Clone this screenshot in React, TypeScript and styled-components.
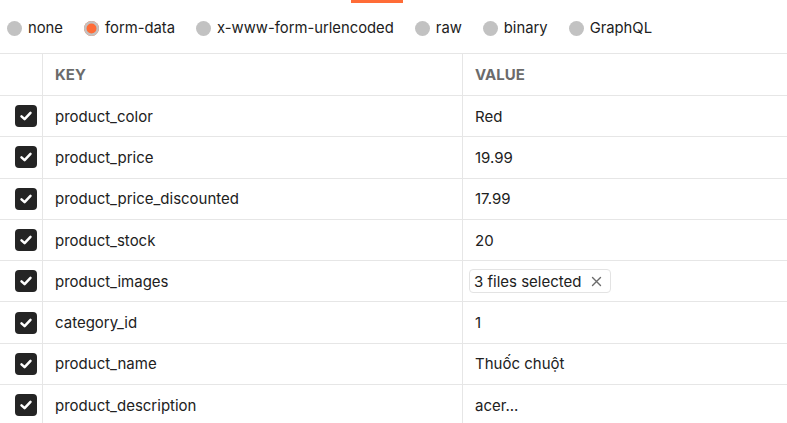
import React from "react";
import styled, { createGlobalStyle } from "styled-components";

const Global = createGlobalStyle`
  html, body { margin: 0; padding: 0; background: #ffffff; }
  body { font-family: Inter, "Noto Sans", sans-serif; color: #212121; overflow: hidden; }
  * { box-sizing: border-box; }
`;

const Page = styled.div`
  width: 787px;
  height: 423px;
  display: flex;
  flex-direction: column;
  position: relative;
  overflow: hidden;
`;

const TabIndicator = styled.div`
  position: absolute;
  top: 0;
  left: 351px;
  width: 52px;
  height: 3px;
  background: #ff6c37;
`;

const RadioBar = styled.div`
  height: 53px;
  flex: none;
  display: flex;
  align-items: center;
  padding: 3px 0 0 7px;
  gap: 21px;
`;

const RadioOption = styled.label`
  display: flex;
  align-items: center;
  gap: 6px;
  font-size: 14.8px;
  color: #212121;
  white-space: nowrap;
`;

const RadioDot = styled.span<{ $checked?: boolean }>`
  width: 15px;
  height: 15px;
  border-radius: 50%;
  background: ${(p) => (p.$checked ? "#ff6c37" : "#c2c2c2")};
  box-shadow: ${(p) => (p.$checked ? "inset 0 0 0 2.5px #c2c2c2" : "none")};
  flex: none;
`;

const Table = styled.div`
  flex: none;
  border-top: 1px solid #e6e6e6;
  display: flex;
  flex-direction: column;
`;

const Row = styled.div<{ $header?: boolean }>`
  display: grid;
  grid-template-columns: 43px 420px 1fr;
  height: ${(p) => (p.$header ? "42px" : "41.3px")};
  border-bottom: 1px solid #e6e6e6;
  flex: none;
`;

const Cell = styled.div<{ $header?: boolean }>`
  display: flex;
  align-items: center;
  padding: 0 12px;
  border-right: 1px solid #e6e6e6;
  font-size: 15px;
  font-weight: ${(p) => (p.$header ? 700 : 400)};
  color: ${(p) => (p.$header ? "#6b6b6b" : "#212121")};
  white-space: nowrap;
  overflow: hidden;
  &:last-child { border-right: none; }
`;

const CheckCell = styled.div`
  display: flex;
  align-items: center;
  justify-content: flex-start;
  padding-left: 15px;
  border-right: 1px solid #e6e6e6;
`;

const CheckBox = styled.span`
  width: 22px;
  height: 22px;
  border-radius: 4px;
  background: #242424;
  display: flex;
  align-items: center;
  justify-content: center;
`;

const FileChip = styled.span`
  display: inline-flex;
  align-items: center;
  gap: 10px;
  height: 24px;
  padding: 0 8px 0 4px;
  margin-left: -6px;
  border: 1px solid #e3e3e3;
  border-radius: 4px;
  font-size: 15px;
  color: #212121;
`;

const Check = () => (
  <svg width="14" height="14" viewBox="0 0 14 14" fill="none">
    <path d="M2.5 7.3 L5.6 10.2 L11.5 3.8" stroke="#fff" strokeWidth="2.5" strokeLinecap="round" strokeLinejoin="round" />
  </svg>
);

const XIcon = () => (
  <svg width="11" height="11" viewBox="0 0 11 11" fill="none">
    <path d="M1.5 1.5 L9.5 9.5 M9.5 1.5 L1.5 9.5" stroke="#6b6b6b" strokeWidth="1.4" strokeLinecap="round" />
  </svg>
);

const options = ["none", "form-data", "x-www-form-urlencoded", "raw", "binary", "GraphQL"];

const rows: { key: string; value: string; files?: boolean }[] = [
  { key: "product_color", value: "Red" },
  { key: "product_price", value: "19.99" },
  { key: "product_price_discounted", value: "17.99" },
  { key: "product_stock", value: "20" },
  { key: "product_images", value: "3 files selected", files: true },
  { key: "category_id", value: "1" },
  { key: "product_name", value: "Thuốc chuột" },
  { key: "product_description", value: "acer..." },
];

export default function App() {
  return (
    <Page>
      <Global />
      <TabIndicator />
      <RadioBar>
        {options.map((o) => (
          <RadioOption key={o}>
            <RadioDot $checked={o === "form-data"} />
            {o}
          </RadioOption>
        ))}
      </RadioBar>
      <Table>
        <Row $header>
          <CheckCell />
          <Cell $header>KEY</Cell>
          <Cell $header>VALUE</Cell>
        </Row>
        {rows.map((r) => (
          <Row key={r.key}>
            <CheckCell>
              <CheckBox>
                <Check />
              </CheckBox>
            </CheckCell>
            <Cell>{r.key}</Cell>
            <Cell>
              {r.files ? (
                <FileChip>
                  {r.value}
                  <XIcon />
                </FileChip>
              ) : (
                r.value
              )}
            </Cell>
          </Row>
        ))}
      </Table>
    </Page>
  );
}
